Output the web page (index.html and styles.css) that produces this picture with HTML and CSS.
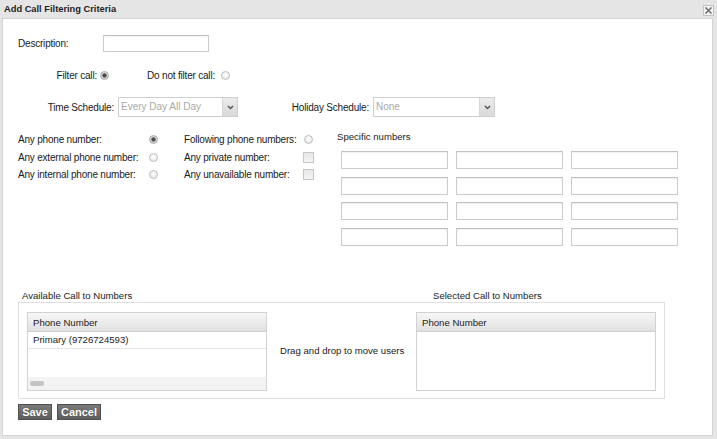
FILE: index.html
```html
<!DOCTYPE html>
<html>
<head>
<meta charset="utf-8">
<link rel="stylesheet" href="styles.css">
</head>
<body>
<div class="dialog">
  <div class="titlebar">
    <span class="title">Add Call Filtering Criteria</span>
    <span class="close"><svg width="9" height="9" viewBox="0 0 9 9"><path d="M1.5 1.5 L7.5 7.5 M7.5 1.5 L1.5 7.5" stroke="#6e6e6e" stroke-width="1.6" fill="none"/></svg></span>
  </div>
  <div class="content">
    <div class="desc-row tlbl">
      <span class="desc-lbl">Description:</span>
      <span class="txt desc-input"></span>
    </div>
    <div class="filter-row tlbl">
      <span class="f-lbl1">Filter call:</span><span class="radio checked r1"></span>
      <span class="f-lbl2">Do not filter call:</span><span class="radio r2"></span>
    </div>
    <div class="sched-row tlbl">
      <span class="s-lbl1">Time Schedule:</span>
      <span class="select sel1"><span class="sel-text">Every Day All Day</span><span class="sel-arrow"><svg width="7" height="5" viewBox="0 0 7 5"><path d="M1 1 L3.5 3.5 L6 1" stroke="#555" stroke-width="1.5" fill="none"/></svg></span></span>
      <span class="s-lbl2">Holiday Schedule:</span>
      <span class="select sel2"><span class="sel-text">None</span><span class="sel-arrow"><svg width="7" height="5" viewBox="0 0 7 5"><path d="M1 1 L3.5 3.5 L6 1" stroke="#555" stroke-width="1.5" fill="none"/></svg></span></span>
    </div>
    <div class="phones">
      <div class="opts tlbl">
        <span>Any phone number:</span><span class="radio checked"></span>
        <span class="lbl2">Following phone numbers:</span><span class="radio"></span>
        <span>Any external phone number:</span><span class="radio"></span>
        <span class="lbl2">Any private number:</span><span class="check"></span>
        <span>Any internal phone number:</span><span class="radio"></span>
        <span class="lbl2">Any unavailable number:</span><span class="check"></span>
      </div>
      <div class="specific">
        <div class="spec-label">Specific numbers</div>
        <div class="spec-grid">
          <span class="txt"></span><span class="txt"></span><span class="txt"></span>
          <span class="txt"></span><span class="txt"></span><span class="txt"></span>
          <span class="txt"></span><span class="txt"></span><span class="txt"></span>
          <span class="txt"></span><span class="txt"></span><span class="txt"></span>
        </div>
      </div>
    </div>
    <div class="transfer">
      <div class="transfer-labels">
        <span class="tl-left">Available Call to Numbers</span>
        <span class="tl-right">Selected Call to Numbers</span>
      </div>
      <div class="transfer-box">
        <div class="grid">
          <div class="grid-head">Phone Number</div>
          <div class="grid-row">Primary (9726724593)</div>
          <div class="grid-fill"></div>
          <div class="grid-scroll"><span class="thumb"></span></div>
        </div>
        <div class="drag">Drag and drop to move users</div>
        <div class="grid grid-right">
          <div class="grid-head">Phone Number</div>
        </div>
      </div>
    </div>
    <div class="buttons">
      <button class="btn btn-save">Save</button>
      <button class="btn btn-cancel">Cancel</button>
    </div>
  </div>
</div>
</body>
</html>
```

FILE: styles.css
```css
html, body {
  margin: 0;
  padding: 0;
  background: #ffffff;
}
body {
  font-family: "Liberation Sans", Arial, sans-serif;
  font-size: 9.6px;
  color: #222;
}
.tlbl {
  font-size: 10px;
  letter-spacing: -0.2px;
  color: #1a1a1a;
}
.dialog {
  width: 717px;
  height: 439px;
  box-sizing: border-box;
  background: #e5e5e5;
  padding: 0 4px 3px 2px;
  display: flex;
  flex-direction: column;
}
.titlebar {
  height: 18px;
  margin: 0 -4px 0 -2px;
  padding: 0 3px 0 4px;
  display: flex;
  align-items: center;
  justify-content: space-between;
}
.title {
  font-weight: bold;
  font-size: 9.3px;
  color: #1e1e1e;
}
.close {
  width: 11px;
  height: 11px;
  box-sizing: border-box;
  border: 1px solid #c4c4c4;
  background: #f3f3f3;
  display: flex;
  align-items: center;
  justify-content: center;
  margin-top: 2px;
}
.close svg { display: block; }
.content {
  flex: 1;
  background: #ffffff;
  border: 1px solid #d4d4d4;
  padding: 16px 0 0 15px;
}
.txt {
  display: block;
  box-sizing: border-box;
  border: 1px solid #cbcbcb;
  border-top-color: #c0c0c0;
  background: #fff;
  box-shadow: inset 0 1px 1px rgba(0,0,0,0.06);
}
.desc-row {
  display: flex;
  align-items: center;
  height: 17px;
}
.desc-lbl { width: 85px; }
.desc-input { width: 106px; height: 17px; }

.radio {
  display: block;
  width: 9px;
  height: 9px;
  box-sizing: border-box;
  border-radius: 50%;
  border: 1px solid #bdbdbd;
  background: radial-gradient(circle at 50% 40%, #ffffff, #e2e2e2);
}
.radio.checked {
  background: radial-gradient(circle, #4a4a4a 0, #4a4a4a 1.8px, #cfcfcf 2.4px, #e0e0e0 100%);
  border-color: #a9a9a9;
}
.check {
  display: block;
  width: 11px;
  height: 11px;
  box-sizing: border-box;
  border: 1px solid #c6c6c6;
  background: linear-gradient(#e6e6e6, #f4f4f4);
}

.filter-row {
  display: flex;
  align-items: center;
  height: 13px;
  margin-top: 17px;
}
.f-lbl1 { width: 79px; text-align: right; }
.r1 { margin-left: 3px; }
.f-lbl2 { width: 106px; text-align: right; }
.r2 { margin-left: 6px; }

.sched-row {
  display: flex;
  align-items: center;
  height: 20px;
  margin-top: 15px;
}
.s-lbl1 { width: 96px; text-align: right; }
.s-lbl2 { width: 131px; text-align: right; }
.select {
  display: flex;
  box-sizing: border-box;
  height: 20px;
  margin-left: 4px;
  border: 1px solid #cfcfcf;
  background: #fff;
  letter-spacing: 0;
}
.sel1 { width: 120px; }
.sel2 { width: 122px; }
.sel-text {
  flex: 1;
  color: #a8a8a8;
  padding-left: 2px;
  line-height: 18px;
}
.sel-arrow {
  width: 14px;
  border-left: 1px solid #d6d6d6;
  background: linear-gradient(#ececec, #d9d9d9);
  display: flex;
  align-items: center;
  justify-content: center;
}
.sel-arrow svg { display: block; }

.phones {
  display: flex;
  margin-top: 14px;
}
.opts {
  display: grid;
  grid-template-columns: 130px 10px 144px 12px;
  grid-auto-rows: 17.5px;
  align-items: center;
  align-self: flex-start;
}
.opts .radio { justify-self: center; }
.opts .check { justify-self: center; }
.opts .lbl2 { padding-left: 26px; }
.specific {
  margin-left: 23px;
}
.spec-label {
  height: 20px;
  line-height: 12px;
}
.spec-grid {
  margin-left: 4px;
  display: grid;
  grid-template-columns: repeat(3, 107px);
  grid-auto-rows: 18px;
  column-gap: 8px;
  row-gap: 7.5px;
}

.transfer { margin-top: 44.5px; }
.transfer-labels {
  display: flex;
  height: 12px;
  line-height: 12px;
}
.tl-left { width: 411px; padding-left: 4px; }
.transfer-box {
  width: 647px;
  height: 97px;
  box-sizing: border-box;
  border: 1px solid #e0e0e0;
  padding: 0 8px;
  display: flex;
  align-items: center;
}
.grid {
  width: 240px;
  height: 79px;
  box-sizing: border-box;
  border: 1px solid #d2d2d2;
  display: flex;
  flex-direction: column;
  margin-top: 1px;
}
.grid-head {
  height: 19px;
  line-height: 19px;
  padding-left: 5px;
  background: linear-gradient(#f7f7f7, #e1e1e1);
  border-bottom: 1px solid #d0d0d0;
  box-sizing: border-box;
}
.grid-row {
  height: 17px;
  line-height: 15px;
  padding-left: 5px;
  border-bottom: 1px solid #e6e6e6;
  box-sizing: border-box;
}
.grid-fill { flex: 1; }
.grid-scroll {
  height: 13px;
  background: #f3f3f3;
  display: flex;
  align-items: center;
  padding-left: 2px;
}
.thumb {
  display: block;
  width: 14px;
  height: 5px;
  border-radius: 3px;
  background: #c4c4c4;
}
.drag { margin-left: 13px; }
.grid-right { margin-left: auto; }

.buttons {
  display: flex;
  gap: 5px;
  margin-top: 5px;
}
.btn {
  height: 16px;
  box-sizing: border-box;
  border: 1px solid #4f4f4f;
  background: linear-gradient(#7a7a7a, #5e5e5e);
  color: #ffffff;
  font-family: "Liberation Sans", Arial, sans-serif;
  font-weight: bold;
  font-size: 11px;
  padding: 0;
  line-height: 14px;
  text-shadow: 0 0 1px rgba(0,0,0,0.4);
}
.btn-save { width: 34px; }
.btn-cancel { width: 44px; }
```
